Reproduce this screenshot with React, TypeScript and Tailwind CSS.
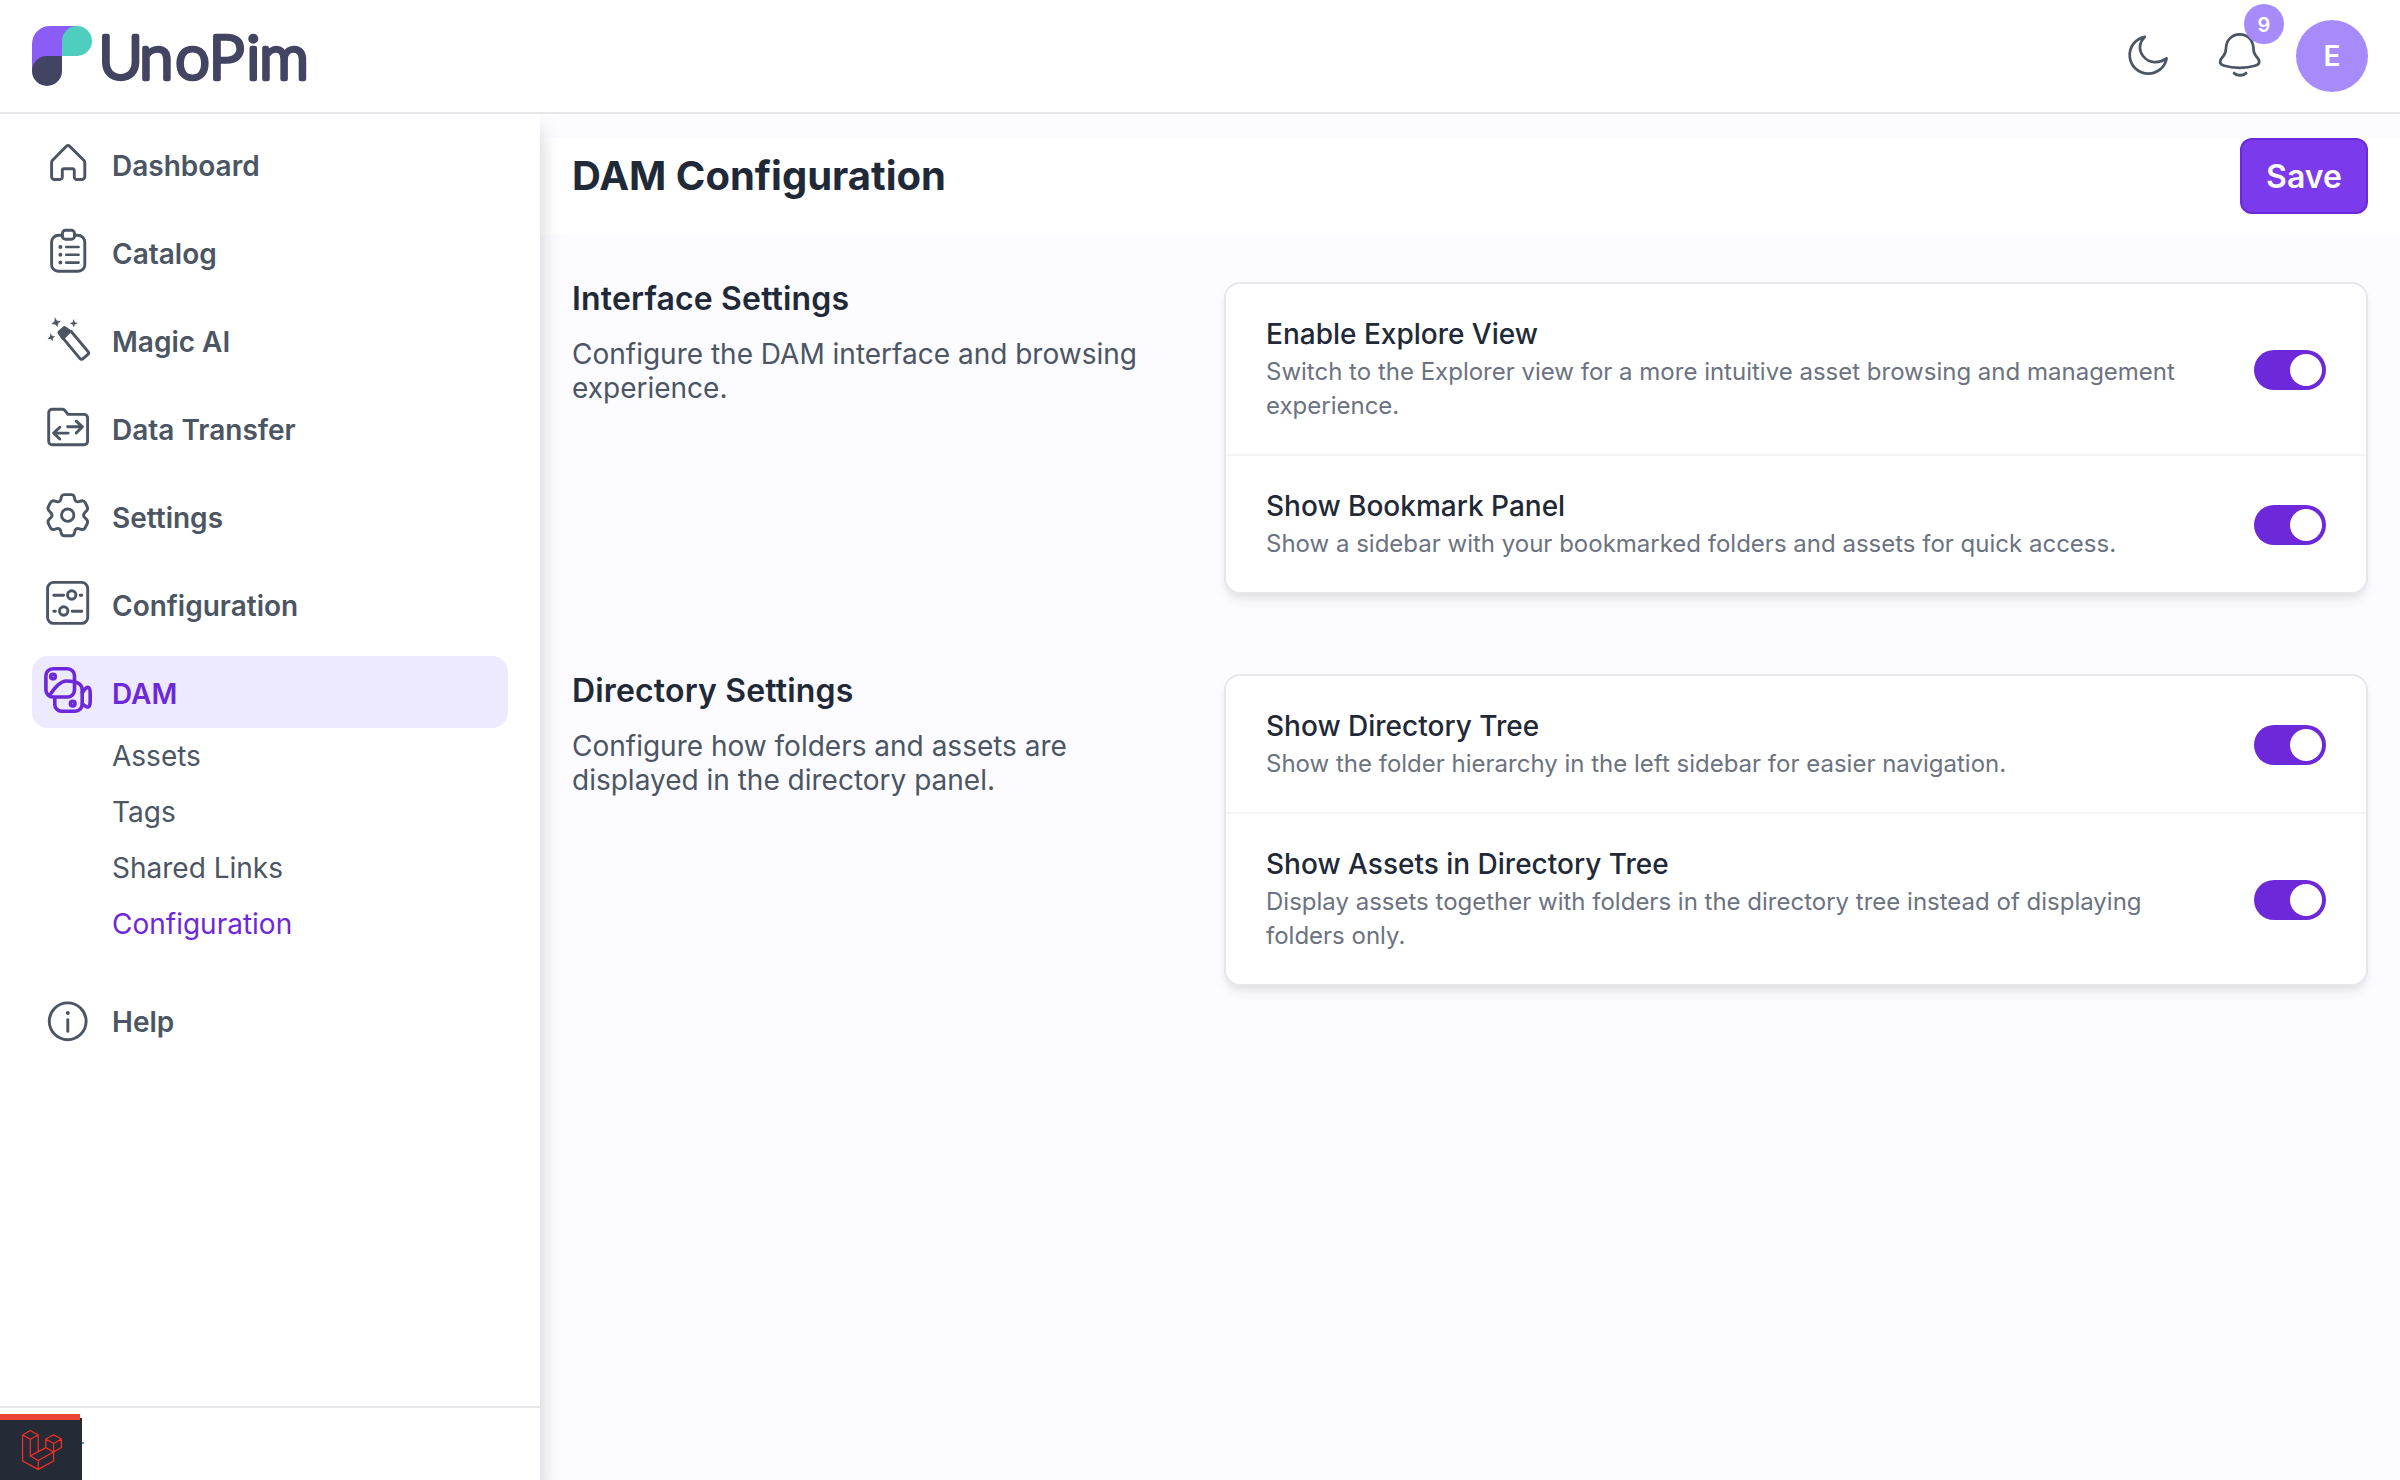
import React, { useState } from "react";

const Logo = () => (
  <svg width="280" height="60" viewBox="0 0 280 60" className="overflow-visible">
    <path d="M0 18A18 18 0 0 1 18 0H46V30H15L0 46Z" fill="#8b5cf6" />
    <path d="M30 15A15 15 0 0 1 60 15A15 15 0 0 1 45 30H30Z" fill="#4fcdbe" />
    <path d="M15 30H30V45A15 15 0 0 1 0 45A15 15 0 0 1 15 30Z" fill="#434362" />
    <text
      x="66.5 107.5 143.5 177 214.5 227.5"
      y="52.5"
      className="font-['Lato',sans-serif] text-[61px] font-light"
      fill="#434362"
      stroke="#434362"
      strokeWidth="4.6"
      strokeLinejoin="round"
    >
      UnoPim
    </text>
  </svg>
);

const Icon = ({ children, width = 2.9 }: { children: React.ReactNode; width?: number }) => (
  <svg
    width="48"
    height="48"
    viewBox="0 0 48 48"
    fill="none"
    stroke="currentColor"
    strokeWidth={width}
    strokeLinecap="round"
    strokeLinejoin="round"
    className="shrink-0 overflow-visible"
  >
    {children}
  </svg>
);

const MoonIcon = () => (
  <Icon width={2.7}>
    <path d="M20.8 4.8A18.6 18.6 0 1 0 42.6 26.4C34.5 32 25 31.5 19 24C14 17.5 15.5 10 20.8 4.8Z" />
  </Icon>
);

const BellIcon = () => (
  <Icon width={2.7}>
    <path d="M23.7 2.4C15.7 2.4 10.2 8.5 10 16C9.9 20.5 9.5 21.8 7.4 24C3 28.6 3 32.2 8.4 33.8C13 35.2 18 35.8 23.7 35.8C29.4 35.8 34.4 35.2 39 33.8C44.4 32.2 44.4 28.6 40 24C37.9 21.8 37.5 20.5 37.4 16C37.2 8.5 31.7 2.4 23.7 2.4Z" />
    <path d="M18.2 41.2C21 44 27.2 44 30 41.2" strokeWidth="3" />
  </Icon>
);

const HomeIcon = () => (
  <Icon>
    <path d="M8.6 20.2L22.6 6.1A2 2 0 0 1 25.5 6.1L39.8 20.2A3.6 3.6 0 0 1 40.8 22.7V36.5A3 3 0 0 1 37.8 39.5H33A2.5 2.5 0 0 1 30.3 37V30.4A1.6 1.6 0 0 0 28.7 28.8H19.9A1.6 1.6 0 0 0 18.3 30.4V37A2.5 2.5 0 0 1 15.7 39.5H10.6A3 3 0 0 1 7.6 36.5V22.7A3.6 3.6 0 0 1 8.6 20.2Z" />
  </Icon>
);

const CatalogIcon = () => (
  <Icon>
    <path d="M18.4 7.2H14.6A7 7 0 0 0 7.6 14.2V36.7A6.5 6.5 0 0 0 14.1 43.2H34.3A6.5 6.5 0 0 0 40.8 36.7V14.2A7 7 0 0 0 33.8 7.2H30.5" />
    <rect x="18.4" y="2.3" width="12.1" height="8.9" rx="3" />
    <path d="M22.2 19H34.6M22.2 26.8H34.6M22.2 34.6H34.6" strokeWidth="2.6" />
    <path d="M16.4 19h.01M16.4 26.8h.01M16.4 34.6h.01" strokeWidth="4" />
  </Icon>
);

const MagicIcon = () => (
  <Icon>
    <path d="M19.2 22.4L36 42.6A2 2 0 0 0 38.7 42.8L43.9 38.4A2 2 0 0 0 44.1 35.6L27 15.2" />
    <path d="M14.8 16.4L20.4 11.4L26 15.3L19 22.6Z" fill="currentColor" />
    <path
      d="M11.2 2.2L12.8 5L16.4 5.2L13.9 7.4L13.4 10.6L11.3 8.3L7.8 7.8L10.5 5.7ZM29.7 4L30.7 6.5L33.2 7.3L30.7 8.2L29.7 10.8L28.7 8.2L26.3 7.3L28.7 6.5ZM6.8 17.9L8 20.3L10.8 20.5L8.7 22L8.6 24.8L6.8 22.9L4 22.8L5.9 20.9Z"
      fill="currentColor"
      strokeWidth="0.5"
    />
  </Icon>
);

const TransferIcon = () => (
  <Icon>
    <path d="M4.7 8.8A3.5 3.5 0 0 1 8.2 5.3H18.3A3 3 0 0 1 20.6 6.2L24 10.4H40.1A3.5 3.5 0 0 1 43.6 13.9V37.2A3.5 3.5 0 0 1 40.1 40.7H8.2A3.5 3.5 0 0 1 4.7 37.2Z" />
    <path d="M23.6 22.8H38.4M32.2 17.2L38.4 22.8L32.2 29M24.2 29.1H9.6M15.8 23.2L9.6 29.1L15.8 35" />
  </Icon>
);

const SettingsIcon = () => (
  <Icon>
    <path d="M20.5 2.6H27.1C28.9 2.6 29.9 3.4 30.3 5L30.8 7.2C31.2 9.2 32.6 10.2 34.6 9.7L37.2 9C39 8.5 40.2 9 41.2 10.7L43.1 14.5C43.9 16.1 43.8 17.5 42.6 18.8L40.7 20.8C39.3 22.3 39.3 24.1 40.7 25.6L42.6 27.6C43.8 28.9 43.9 30.3 43.1 31.9L41.2 35.7C40.2 37.4 39 37.9 37.2 37.4L34.6 36.7C32.6 36.2 31.2 37.2 30.8 39.2L30.3 41.4C29.9 43 28.9 43.8 27.1 43.8H20.5C18.7 43.8 17.7 43 17.3 41.4L16.8 39.2C16.4 37.2 15 36.2 13 36.7L10.4 37.4C8.6 37.9 7.4 37.4 6.4 35.7L4.5 31.9C3.7 30.3 3.8 28.9 5 27.6L6.9 25.6C8.3 24.1 8.3 22.3 6.9 20.8L5 18.8C3.8 17.5 3.7 16.1 4.5 14.5L6.4 10.7C7.4 9 8.6 8.5 10.4 9L13 9.7C15 10.2 16.4 9.2 16.8 7.2L17.3 5C17.7 3.4 18.7 2.6 20.5 2.6Z" />
    <circle cx="23.7" cy="23.2" r="6.2" />
  </Icon>
);

const ConfigIcon = () => (
  <Icon>
    <rect x="3.6" y="2.4" width="40.1" height="41" rx="6" />
    <circle cx="27.7" cy="15" r="4.2" />
    <circle cx="19.7" cy="31" r="4.2" />
    <path d="M9.8 15.2H19.6M36.2 15.2H37.8M9.8 31.2H11.4M28.2 31.2H37.8" />
  </Icon>
);

const DamIcon = () => (
  <Icon width={3.6}>
    <rect x="1.9" y="0.8" width="28.6" height="28.2" rx="7" />
    <circle cx="9" cy="8.6" r="2.3" />
    <circle cx="28.7" cy="35.7" r="2.3" />
    <path d="M5.6 27.4C10 20.5 15.5 13 22.4 13C32 13 38.2 15.5 38.2 22V36.4A7 7 0 0 1 31.2 43.2H17.6A6.8 6.8 0 0 1 10.8 36.4V29.5" />
    <path d="M38.4 24.5C41 20.5 43 19.2 44.3 19.4C45.6 19.7 46.1 21.5 46.2 25V33.5C46.1 37 45.6 38.8 44.3 39C43 39.2 41 38 38.4 35.8" />
  </Icon>
);

const HelpIcon = () => (
  <Icon>
    <circle cx="23.7" cy="25.3" r="18.4" />
    <path d="M23.8 23.6V35.4" />
    <path d="M23.8 17h.01" strokeWidth="4" />
  </Icon>
);

const LaravelIcon = () => (
  <svg width="40" height="40" viewBox="0 0 40 40" fill="none" stroke="#ff2d20" strokeWidth="1.2" strokeLinejoin="round">
    <path d="M.6 5L8.3.6L16.2 5V21.5M.6 5L8.3 9.3L16.2 5M.6 5V31L16.2 39.4L31.6 31V22L16.2 30.5L8.3 26V9.3M16.2 30.5V39.4M8.3 26L23.8 17.6M31.6 22L23.8 17.6V9L31.6 4.8L39.4 9V17.6L31.6 22V13.4L23.8 9M31.6 13.4L39.4 9" />
  </svg>
);

const menu = [
  { name: "Dashboard", icon: HomeIcon },
  { name: "Catalog", icon: CatalogIcon },
  { name: "Magic AI", icon: MagicIcon },
  { name: "Data Transfer", icon: TransferIcon },
  { name: "Settings", icon: SettingsIcon },
  { name: "Configuration", icon: ConfigIcon },
  { name: "DAM", icon: DamIcon, children: ["Assets", "Tags", "Shared Links", "Configuration"] },
  { name: "Help", icon: HelpIcon },
];

const sections = [
  {
    title: "Interface Settings",
    info: "Configure the DAM interface and browsing experience.",
    fields: [
      {
        title: "Enable Explore View",
        info: "Switch to the Explorer view for a more intuitive asset browsing and management experience.",
      },
      {
        title: "Show Bookmark Panel",
        info: "Show a sidebar with your bookmarked folders and assets for quick access.",
      },
    ],
  },
  {
    title: "Directory Settings",
    info: "Configure how folders and assets are displayed in the directory panel.",
    fields: [
      {
        title: "Show Directory Tree",
        info: "Show the folder hierarchy in the left sidebar for easier navigation.",
      },
      {
        title: "Show Assets in Directory Tree",
        info: "Display assets together with folders in the directory tree instead of displaying folders only.",
      },
    ],
  },
];

const Toggle = () => {
  const [on, setOn] = useState(true);

  return (
    <button
      onClick={() => setOn(!on)}
      className={`flex h-10 w-[72px] shrink-0 items-center rounded-full px-1 ${
        on ? "justify-end bg-[#6d28d9]" : "justify-start bg-gray-200"
      }`}
    >
      <span className="h-8 w-8 rounded-full bg-white" />
    </button>
  );
};

const Header = () => (
  <header className="relative z-20 flex h-[114px] shrink-0 items-center justify-between border-b-2 border-[#e5e7eb] bg-white px-8">
    <Logo />
    <div className="flex items-center text-[#4b5563]">
      <MoonIcon />
      <div className="relative mr-8 ml-11">
        <BellIcon />
        <span className="absolute -top-7 left-7 flex h-10 w-10 items-center justify-center rounded-full bg-[#a78bfa] pt-0.5 text-[20px] font-semibold text-white">
          9
        </span>
      </div>
      <button className="flex h-[72px] w-[72px] items-center justify-center rounded-full bg-[#a78bfa] text-[28px] font-semibold text-white">
        E
      </button>
    </div>
  </header>
);

const Sidebar = () => (
  <aside className="relative z-10 flex w-[540px] shrink-0 flex-col bg-white shadow-[0px_16px_20px_0px_rgba(0,0,0,0.2)]">
    <nav className="flex grow flex-col gap-4 px-8 pt-3.5">
      {menu.map((item) => (
        <div key={item.name}>
          <a
            className={`flex h-[72px] items-center gap-5 rounded-2xl px-3 text-[28px] font-semibold ${
              item.children ? "bg-[#ede9fe] text-[#6d28d9]" : "text-[#4b5563]"
            }`}
          >
            <item.icon />
            <span className="pt-[3px]">{item.name}</span>
          </a>
          {item.children && (
            <div className="flex flex-col gap-4 pt-2 pb-6 pl-20 text-[28px] leading-10 text-[#4b5563]">
              {item.children.map((child) => (
                <a key={child} className={child === "Configuration" ? "text-[#6d28d9]" : ""}>
                  {child}
                </a>
              ))}
            </div>
          )}
        </div>
      ))}
    </nav>

    {/* Collapse bar */}
    <div className="relative h-[74px] border-t-2 border-[#e5e7eb]">
      {/* Debugbar handle */}
      <div className="absolute top-2.5 left-0 flex h-[62px] w-[82px] items-center justify-center bg-[#252a37] pt-0.5 pl-0.5">
        <div className="absolute -top-1 left-0 h-1.5 w-20 bg-[#eb4432]" />
        <LaravelIcon />
        <div className="absolute top-6 -right-0.5 h-0.5 w-0.5 bg-[#5b8fd0]" />
      </div>
    </div>
  </aside>
);

const App = () => {
  return (
    <div className="flex h-screen flex-col overflow-hidden bg-[#fcfbff] font-['Inter',sans-serif]">
      <Header />

      <div className="flex grow">
        <Sidebar />

        <main className="grow pt-6">
          <div className="flex items-center justify-between bg-white px-8 pb-5">
            <h1 className="text-[40px] font-bold text-[#1f2937]">DAM Configuration</h1>
            <button className="flex h-[76px] w-32 items-center justify-center rounded-xl border-2 border-[#6d28d9] bg-[#7c3aed] pt-0.5 text-[32px] font-semibold text-gray-50">
              Save
            </button>
          </div>

          <div className="flex flex-col gap-20 px-8 pt-12">
            {sections.map((section) => (
              <section key={section.title} className="flex items-start gap-10">
                <div className="w-[612px] shrink-0">
                  <h2 className="pt-px text-[32px] leading-8 font-semibold tracking-[0.16px] text-[#1f2937]">
                    {section.title}
                  </h2>
                  <p className="mt-[22px] text-[28px] leading-[34px] text-[#4b5563]">{section.info}</p>
                </div>

                <div className="grow divide-y-2 divide-[#f3f4f6] rounded-2xl border-2 border-[#e5e7eb] bg-white shadow-[0_8px_12px_-2px_rgba(0,0,0,0.08),0_4px_8px_-4px_rgba(0,0,0,0.08)]">
                  {section.fields.map((field) => (
                    <div key={field.title} className="flex items-center justify-between gap-10 px-10 pt-[33px] pb-[31px]">
                      <div>
                        <p className="text-[28px] leading-[34px] font-medium text-[#1f2937]">{field.title}</p>
                        <p className="mt-1 text-[24px] leading-[34px] text-[#6b7280]">{field.info}</p>
                      </div>
                      <Toggle />
                    </div>
                  ))}
                </div>
              </section>
            ))}
          </div>
        </main>
      </div>
    </div>
  );
};

export default App;
